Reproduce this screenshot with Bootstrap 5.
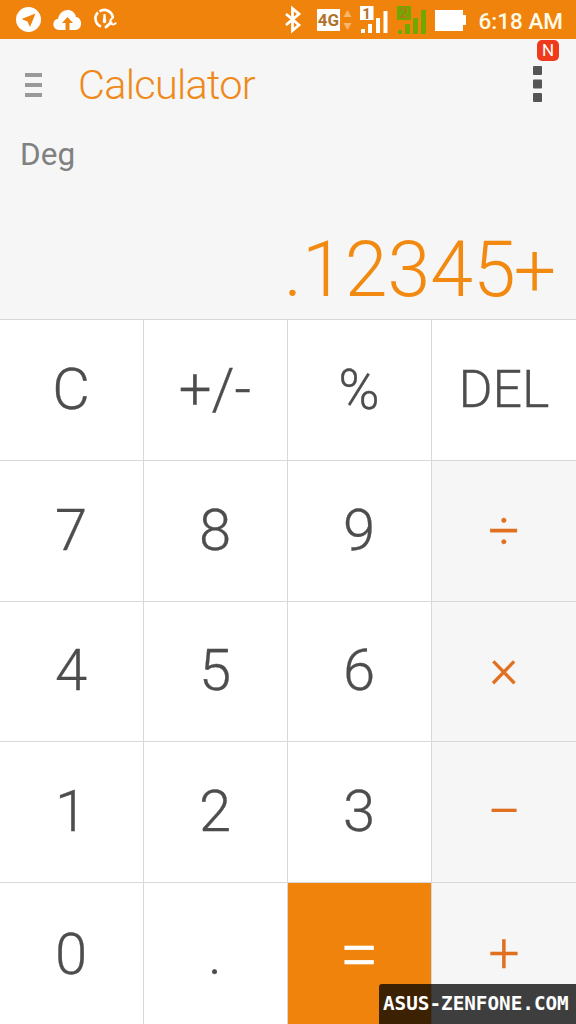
<!DOCTYPE html>
<html lang="en">
<head>
    <meta charset="UTF-8">
    <meta name="viewport" content="width=device-width, initial-scale=1.0">
    <title>Calculator</title>
    <link href="https://cdn.jsdelivr.net/npm/bootstrap@5.3.0/dist/css/bootstrap.min.css" rel="stylesheet">
    <style>
        body {
            font-family: Roboto, "Liberation Sans", sans-serif;
            font-weight: 300;
            background-color: #f6f6f6;
        }
        .status-bar {
            height: 39px;
            background-color: #f0830c;
            padding: 0 13px 0 15px;
        }
        .status-bar svg {
            display: block;
            flex-shrink: 0;
        }
        .clock {
            font-size: 22.5px;
            font-weight: 500;
            line-height: 39px;
            color: #fffbe8;
            padding-top: 3px;
        }
        .app-bar {
            height: 91px;
            padding: 0 25px;
        }
        .app-title {
            font-size: 41.5px;
            font-weight: 300;
            line-height: 91px;
            letter-spacing: -0.75px;
            color: #ee8a1c;
            margin-left: 36px;
        }
        .menu-dots {
            width: 28px;
            margin-top: -2px;
        }
        .new-badge {
            top: 1px;
            left: 537px;
            width: 22px;
            height: 21px;
            border-radius: 5px;
            background-color: #f03a1c;
            color: #fff;
            font-size: 17px;
            font-weight: 400;
            line-height: 21px;
        }
        .display-area {
            height: 189px;
            padding: 0 20px;
        }
        .angle-mode {
            font-size: 31.5px;
            font-weight: 400;
            line-height: 50px;
            color: #808080;
        }
        .result {
            font-size: 77px;
            line-height: 92px;
            color: #f28a12;
            margin-top: 44px;
        }
        .result-op {
            font-size: 75px;
            line-height: 1;
            margin-left: -2px;
        }
        .keypad {
            grid-template-columns: repeat(4, 144px);
            grid-template-rows: 141px 141px 140px 141px 142px;
        }
        .key {
            border: 0 solid #d8d8d8;
            border-width: 1px 1px 0 0;
            background-color: #fff;
            color: #4d4d4d;
            font-size: 58px;
            font-weight: 300;
            line-height: 1;
            padding: 0 1px 3px 0;
            -webkit-text-stroke: 0.3px currentColor;
        }
        .key:nth-child(4n) {
            border-right-width: 0;
        }
        .key-low {
            padding-bottom: 0;
        }
        .key-op {
            background-color: #f6f6f6;
            color: #e07020;
            font-size: 55px;
            padding: 0;
        }
        .key-times {
            padding-bottom: 7px;
        }
        .key-minus {
            font-size: 60px;
        }
        .key-equals {
            background-color: #f0830c;
            color: #fff;
            font-size: 70px;
            padding: 0 1px 0 0;
            -webkit-text-stroke-width: 0.6px;
        }
        .key-percent {
            font-size: 56px;
            padding: 0 1px 0 0;
        }
        .key-delete {
            font-size: 52px;
            padding: 0;
        }
        .site-tag {
            right: 0;
            bottom: 0;
            width: 197px;
            height: 40px;
            padding-left: 4px;
            border-top-left-radius: 3px;
            background-color: rgba(0, 0, 0, 0.75);
            color: #fff;
            font-family: "DejaVu Sans Mono", monospace;
            font-size: 19.3px;
            font-weight: 700;
            line-height: 40px;
            white-space: nowrap;
        }
    </style>
</head>
<body class="vh-100 overflow-hidden position-relative">
    <div class="status-bar d-flex align-items-center justify-content-between">
        <svg width="110" height="39" viewBox="15 0 110 39">
            <circle cx="28.5" cy="19.5" r="12.5" fill="#fff"/>
            <path d="M35.500 13.500L30 27L27.500 21.500L21.500 19Z" fill="#f0830c"/>
            <path d="M60 30C51 30 52 19 58 19C60 8 74 7 76 17C83 18 83 30 75 30Z" fill="#fff"/>
            <path d="M67.500 17L73 23H69.500V30H65.500V23H62Z" fill="#f0830c"/>
            <path d="M101 26.500A8.500 8.500 0 0 1 98 12.500M99.500 11.500A8.500 8.500 0 0 1 112.800 18.500" fill="none" stroke="#fff" stroke-width="2.600"/>
            <path d="M103.500 14H105.500L106.300 22Q104.500 24.500 102.700 22Z" fill="#fff"/>
            <path d="M106 27L111 22.500" stroke="#fff" stroke-width="3" stroke-linecap="round"/>
            <path d="M112.500 18.500A3 3 0 1 0 116 22.500" fill="none" stroke="#fff" stroke-width="2"/>
        </svg>
        <div class="d-flex align-items-center">
            <svg width="195" height="39" viewBox="284 0 195 39" font-family="Roboto, sans-serif">
                <!-- bluetooth -->
                <path d="M286 14L299 25L292.500 30.500V8.500L299 14L286 25" fill="none" stroke="#fff" stroke-width="2.800"/>
                <!-- mobile data -->
                <rect x="317" y="9" width="23" height="22" fill="#fff"/>
                <text x="328.500" y="26" font-size="17" font-weight="700" text-anchor="middle" fill="#b0722c">4G</text>
                <path d="M343.500 17L347.500 10L351.500 17ZM343.500 23H351.500L347.500 30Z" fill="#f9b56c"/>
                <!-- SIM 1 -->
                <rect x="360" y="6" width="13.500" height="14" fill="#fff"/>
                <text x="366.500" y="18.500" font-size="15" font-weight="700" text-anchor="middle" fill="#b0722c">1</text>
                <path d="M361 29H365V33H361ZM368 24H372V33H368ZM376 18H380V33H376ZM383.500 11H387.500V33H383.500Z" fill="#fff"/>
                <!-- SIM 2 -->
                <rect x="397" y="6" width="14" height="14" fill="#70a800"/>
                <text x="404" y="18" font-size="14" font-weight="700" text-anchor="middle" fill="#b07c14">2</text>
                <path d="M398 30H402V34H398ZM405 24H410V34H405ZM413 18H418V34H413ZM421 10H426V34H421Z" fill="#70a800"/>
                <!-- battery -->
                <path d="M435 10H463V15H466V25H463V31H435Z" fill="#fff"/>
            </svg>
            <div class="clock">6:18 AM</div>
        </div>
    </div>

    <header class="app-bar d-flex align-items-center position-relative">
        <svg width="17" height="24" viewBox="0 0 17 24" fill="#999">
            <rect width="17" height="4"/>
            <rect y="10" width="17" height="4"/>
            <rect y="20" width="17" height="4"/>
        </svg>
        <h1 class="app-title mb-0 me-auto">Calculator</h1>
        <svg class="menu-dots" width="28" height="36" viewBox="0 0 28 36" fill="#555">
            <rect x="10" width="9" height="9" rx="1"/>
            <rect x="10" y="13.500" width="9" height="9" rx="1"/>
            <rect x="10" y="27" width="9" height="9" rx="1"/>
        </svg>
        <span class="new-badge position-absolute text-center">N</span>
    </header>

    <section class="display-area">
        <div class="angle-mode">Deg</div>
        <div class="result text-end">.12345<span class="result-op">+</span></div>
    </section>

    <main class="keypad d-grid">
        <button class="key">C</button>
        <button class="key">+/-</button>
        <button class="key key-percent">%</button>
        <button class="key key-delete">DEL</button>
        <button class="key">7</button>
        <button class="key">8</button>
        <button class="key">9</button>
        <button class="key key-op">÷</button>
        <button class="key">4</button>
        <button class="key">5</button>
        <button class="key">6</button>
        <button class="key key-op key-times">×</button>
        <button class="key">1</button>
        <button class="key">2</button>
        <button class="key">3</button>
        <button class="key key-op key-minus">−</button>
        <button class="key key-low">0</button>
        <button class="key key-low">.</button>
        <button class="key key-equals">=</button>
        <button class="key key-op">+</button>
    </main>

    <div class="site-tag position-absolute">ASUS-ZENFONE.COM</div>

    <script src="https://cdn.jsdelivr.net/npm/bootstrap@5.3.0/dist/js/bootstrap.bundle.min.js"></script>
</body>
</html>
